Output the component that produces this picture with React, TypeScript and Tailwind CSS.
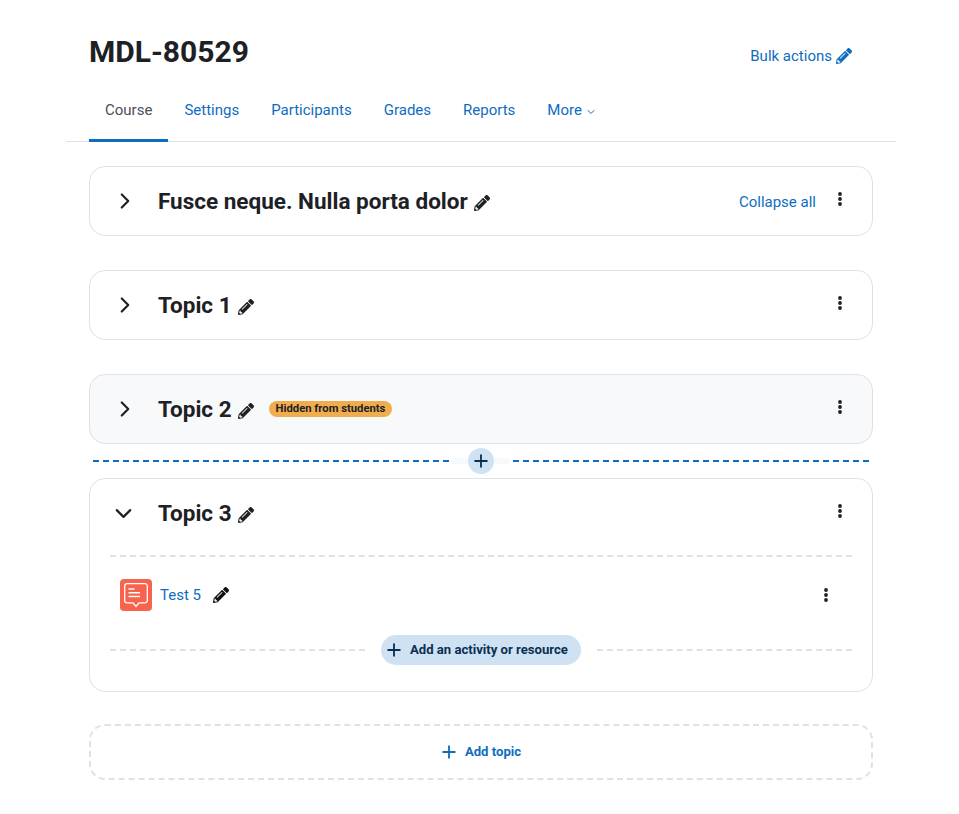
import React from "react";
import { FaPencilAlt } from "react-icons/fa";
import { ChevronRight, ChevronDown, Plus } from "lucide-react";

function Kebab() {
  return (
    <svg width="4" height="14" viewBox="0 0 4 14" className="fill-[#1d2125]">
      <circle cx="2" cy="2" r="1.9" />
      <circle cx="2" cy="7" r="1.9" />
      <circle cx="2" cy="12" r="1.9" />
    </svg>
  );
}

function SectionHeader({
  title,
  open,
  children,
}: {
  title: string;
  open?: boolean;
  children?: React.ReactNode;
}) {
  return (
    <div className="flex h-[68px] items-center">
      <div className="flex w-[68px] justify-center pl-[2px]">
        {open ? (
          <ChevronDown size={27} strokeWidth={1.9} className="-ml-[3px] mt-[1px] text-[#1d2125]" />
        ) : (
          <ChevronRight size={26} strokeWidth={2} className="text-[#1d2125]" />
        )}
      </div>
      <h3 className="text-[22.5px] leading-[24px] font-bold text-[#1d2125]">{title}</h3>
      <FaPencilAlt size={16} className="ml-[6px] mt-[3px] text-[#1d2125]" />
      {children}
    </div>
  );
}

function SectionKebab() {
  return (
    <div className="ml-auto mr-[30px] mb-[4px] flex">
      <Kebab />
    </div>
  );
}

export default function App() {
  const tabs = ["Settings", "Participants", "Grades", "Reports"];
  return (
    <div className="h-[814px] bg-white font-['Roboto',sans-serif] text-[#1d2125]">
      <div className="ml-[66px] w-[830px]">
        <div className="flex h-[79px] items-start pl-[23px] pr-[44px] pt-[32px]">
          <h1 className="text-[30px] leading-[40px] font-bold text-[#1d2125]">MDL-80529</h1>
          <a className="ml-auto mt-[14px] flex items-center text-[15px] leading-[20px] text-[#0f6cbf]">
            Bulk actions
            <FaPencilAlt size={16} className="ml-[4px] mb-[1px]" />
          </a>
        </div>
        <div className="flex h-[63px] border-b border-[#dee2e6] pl-[23px]">
          <div className="-mb-px flex h-[63px] items-center border-b-[3px] border-[#0f6cbf] px-[16px] pt-[3px] text-[15px] text-[#495057]">
            Course
          </div>
          {tabs.map((t) => (
            <div key={t} className="flex h-[63px] items-center px-[16px] text-[15px] text-[#0f6cbf]">
              {t}
            </div>
          ))}
          <div className="flex h-[63px] items-center gap-[3px] px-[16px] text-[15px] text-[#0f6cbf]">
            More
            <ChevronDown size={12} strokeWidth={2} className="mt-[2px]" />
          </div>
        </div>
      </div>

      <div className="ml-[89px] w-[784px] pt-[24px]">
        <div className="rounded-[16px] border border-[#dee2e6] bg-white">
          <SectionHeader title="Fusce neque. Nulla porta dolor">
            <a className="ml-auto mt-[2px] text-[15px] text-[#0f6cbf]">Collapse all</a>
            <div className="ml-[22px] mr-[30px] mb-[4px] flex">
              <Kebab />
            </div>
          </SectionHeader>
        </div>

        <div className="mt-[34px] rounded-[16px] border border-[#dee2e6] bg-white">
          <SectionHeader title="Topic 1">
            <SectionKebab />
          </SectionHeader>
        </div>

        <div className="mt-[34px] rounded-[16px] border border-[#dee2e6] bg-[#f8f9fa]">
          <SectionHeader title="Topic 2">
            <span className="ml-[15px] rounded-full bg-[#f0ad4e] px-[7px] text-[11.25px] leading-[16px] font-bold text-[#1d2125]">
              Hidden from students
            </span>
            <SectionKebab />
          </SectionHeader>
        </div>

        <div className="flex h-[34px] items-center px-[4px]">
          <div className="flex-1 border-t-2 border-dashed border-[#0f6cbf]" />
          <div className="mx-[3px] flex h-[6px] w-[58px] items-center justify-center bg-[#f8f9fa]">
            <div className="flex h-[26px] w-[26px] shrink-0 items-center justify-center rounded-full bg-[#cfe2f3]">
              <Plus size={20} strokeWidth={2.2} className="text-[#0b2f52]" />
            </div>
          </div>
          <div className="flex-1 border-t-2 border-dashed border-[#0f6cbf]" />
        </div>

        <div className="h-[214px] rounded-[16px] border border-[#dee2e6] bg-white">
          <SectionHeader title="Topic 3" open>
            <SectionKebab />
          </SectionHeader>
          <div className="mx-[20px] mt-[8px] border-t-2 border-dashed border-[#dee2e6]" />
          <div className="flex h-[78px] items-center pb-[2px] pl-[30px] pr-[44px]">
            <div className="h-[32px] w-[32px] rounded-[4px] bg-[#f7634d]">
              <svg width="32" height="32" viewBox="0 0 32 32" fill="none" stroke="white">
                <path d="M7 4.7h18a2.3 2.3 0 0 1 2.3 2.3v14.5a2.3 2.3 0 0 1-2.3 2.3h-6L16 27.5l-3-3.7H7a2.3 2.3 0 0 1-2.3-2.3V7A2.3 2.3 0 0 1 7 4.7z" strokeWidth="1.3" />
                <path d="M8.5 10h6M8.5 13.8h11.5M8.5 17.6h11.5" strokeWidth="1.5" />
              </svg>
            </div>
            <a className="ml-[8px] text-[15px] text-[#0f6cbf]">Test 5</a>
            <FaPencilAlt size={16} className="ml-[12px] mb-[1px] text-[#111111]" />
            <div className="ml-auto flex">
              <Kebab />
            </div>
          </div>
          <div className="mx-[20px] flex items-center">
            <div className="flex-1 border-t-2 border-dashed border-[#dee2e6]" />
            <button className="mx-[16px] flex h-[30px] w-[200px] items-center rounded-full bg-[#cfe2f3] pl-[3px] text-[13.125px] font-bold text-[#0b2f52]">
              <Plus size={20} strokeWidth={2.2} />
              <span className="ml-[6px]">Add an activity or resource</span>
            </button>
            <div className="flex-1 border-t-2 border-dashed border-[#dee2e6]" />
          </div>
        </div>

        <div className="mt-[32px] flex h-[56px] items-center justify-center rounded-[16px] border-2 border-dashed border-[#dee2e6] pr-[2px] text-[13.125px] font-bold text-[#0f6cbf]">
          <Plus size={20} strokeWidth={2.2} className="mr-[6px]" />
          Add topic
        </div>
      </div>
    </div>
  );
}
